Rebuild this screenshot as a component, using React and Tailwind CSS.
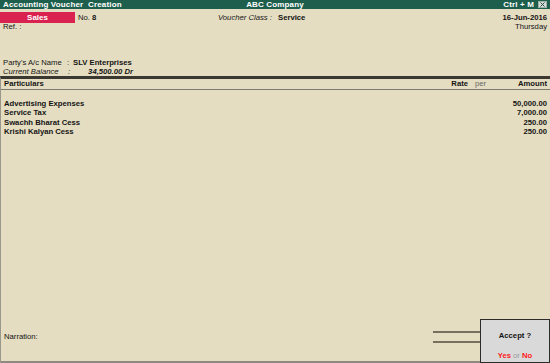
export default function App() {
  const rows = [
    ["Advertising Expenses", "50,000.00"],
    ["Service Tax", "7,000.00"],
    ["Swachh Bharat Cess", "250.00"],
    ["Krishi Kalyan Cess", "250.00"],
  ];
  return (
    <div
      className="relative w-[550px] h-[363px] overflow-hidden bg-[#e4ddc1] text-[#141414] flex flex-col text-[7.7px]"
      style={{ fontFamily: '"Liberation Sans", Arial, sans-serif' }}
    >
      {/* Title bar */}
      <div className="h-[9px] bg-[#1e5e4c] text-white font-bold text-[8px] leading-[9px] grid grid-cols-[1fr_auto_1fr] px-[3px] tracking-[0.15px]">
        <div>Accounting Voucher&nbsp; Creation</div>
        <div>ABC Company</div>
        <div className="flex justify-end items-center gap-[4px]">
          <span>Ctrl + M</span>
          <span className="w-[9px] h-[7px] bg-[#d5ddd9] border border-[#9fb0a9] flex items-center justify-center">
            <svg width="5" height="5" viewBox="0 0 5 5">
              <path d="M0.5 0.5 L4.5 4.5 M4.5 0.5 L0.5 4.5" stroke="#2a4a40" strokeWidth="1" />
            </svg>
          </span>
        </div>
      </div>

      {/* Header row 1 */}
      <div className="mt-[3px] h-[11px] flex items-center pr-[3px]">
        <div className="w-[75px] h-[11px] bg-[#d9224f] text-white font-bold text-[8px] flex items-center justify-center">
          Sales
        </div>
        <div className="w-[143px] pl-[3px]">
          No. <span className="font-bold">8</span>
        </div>
        <div className="w-[60px] italic">Voucher Class :</div>
        <div className="flex-1 font-bold">Service</div>
        <div className="font-bold">16-Jun-2016</div>
      </div>
      <div className="h-[8px] leading-[8px] flex justify-between px-[3px]">
        <span>Ref. :</span>
        <span>Thursday</span>
      </div>

      <div className="h-[27px]" />

      <div className="h-[9px] leading-[9px] flex px-[3px]">
        <div className="w-[64px]">Party's A/c Name</div>
        <div className="w-[6px]">:</div>
        <div className="font-bold">SLV Enterprises</div>
      </div>
      <div className="h-[9px] leading-[9px] flex px-[3px] italic">
        <div className="w-[65px]">Current Balance</div>
        <div className="w-[5px]">:</div>
        <div className="w-[60px] text-right font-bold">34,500.00 Dr</div>
      </div>

      {/* Body */}
      <div className="flex-1 flex flex-col border-t-[3px] border-[#3a3831] border-l border-l-[#9a968a]">
        <div className="h-[11px] leading-[10px] flex px-[3px] border-b border-[#7d7a70] font-bold">
          <div className="flex-1">Particulars</div>
          <div className="w-[40px] text-right">Rate</div>
          <div className="w-[30px] pl-[7px] font-normal text-[#666]">per</div>
          <div className="w-[49px] text-right">Amount</div>
        </div>
        <div className="pt-[9px] flex flex-col font-bold">
          {rows.map(([n, a]) => (
            <div key={n} className="h-[9.4px] leading-[9.4px] flex px-[3px]">
              <div className="flex-1">{n}</div>
              <div className="w-[60px] text-right">{a}</div>
            </div>
          ))}
        </div>
        <div className="flex-1" />
        <div className="h-[35px] flex border-b-2 border-[#8c8a82]">
          <div className="flex-1 pl-[3px] pt-[5px] leading-[8px]">Narration:</div>
          <div className="w-[117px] pt-[3px] flex flex-col gap-[8px]">
            <div className="h-[2px] bg-[#77705f]" />
            <div className="h-[2px] bg-[#77705f]" />
          </div>
        </div>
      </div>

      {/* Accept dialog */}
      <div className="absolute left-[480px] top-[319px] w-[70px] h-[44px] bg-[#d9d9d9] border-[1.5px] border-[#2b2b2b] flex flex-col items-center font-bold">
        <div className="mt-[12px] leading-[8px]">Accept ?</div>
        <div className="mt-[12px] leading-[8px] text-[#ff1a1a]">
          Yes <span className="font-normal text-[#999]">or</span> No
        </div>
      </div>
    </div>
  );
}
